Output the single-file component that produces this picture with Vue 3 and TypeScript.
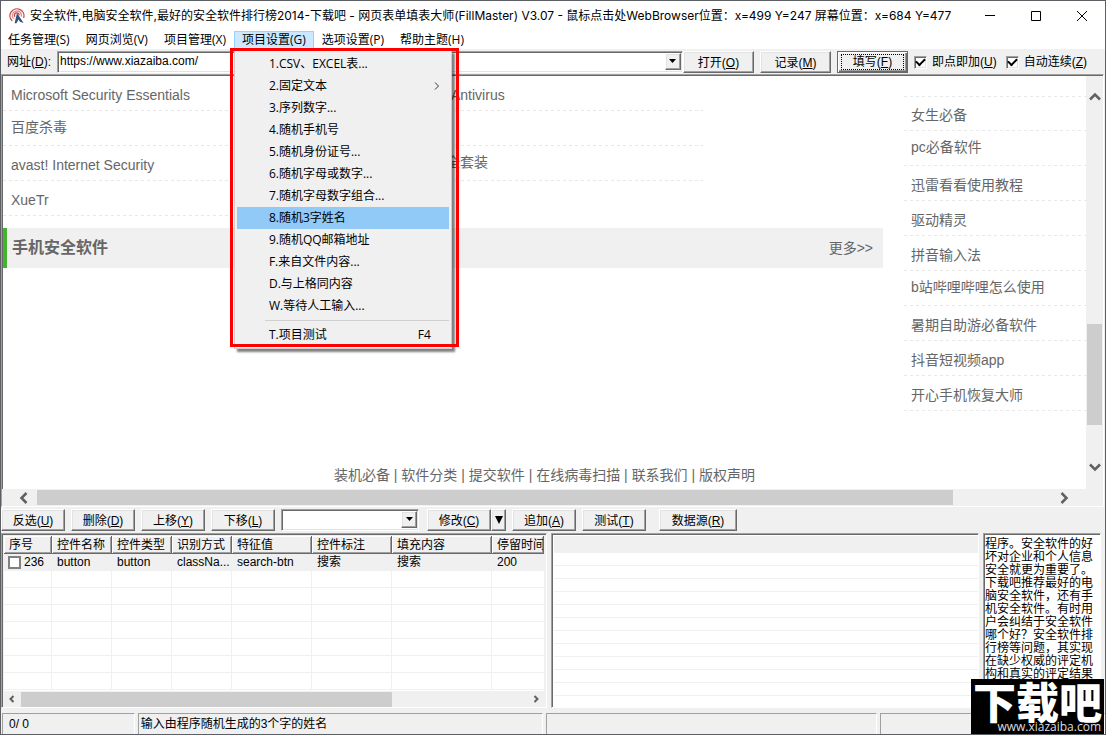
<script setup lang="ts">
import { ref } from 'vue'

interface MenuEntry { label: string; sub?: boolean; key?: string; divided?: boolean }
interface PageLink { text: string; raised?: boolean }

const menus = ['任务管理(S)', '网页浏览(V)', '项目管理(X)', '项目设置(G)', '选项设置(P)', '帮助主题(H)']
const openMenu = ref(3)
const active = ref(7)
const entries: MenuEntry[] = [
  { label: '1.CSV、EXCEL表...' },
  { label: '2.固定文本', sub: true },
  { label: '3.序列数字...' },
  { label: '4.随机手机号' },
  { label: '5.随机身份证号...' },
  { label: '6.随机字母或数字...' },
  { label: '7.随机字母数字组合...' },
  { label: '8.随机3字姓名' },
  { label: '9.随机QQ邮箱地址' },
  { label: 'F.来自文件内容...' },
  { label: 'D.与上格同内容' },
  { label: 'W.等待人工输入...' },
  { label: 'T.项目测试', key: 'F4', divided: true },
]

const url = ref('https://www.xiazaiba.com/')
const addOnClick = ref(true)
const autoContinue = ref(true)

const leftLinks: PageLink[] = [
  { text: 'Microsoft Security Essentials' },
  { text: '百度杀毒', raised: true },
  { text: 'avast! Internet Security' },
  { text: 'XueTr' },
]
const middleLinks: PageLink[] = [{ text: 'Antivirus' }, { text: '' }, { text: '全套装', raised: true }]
const sideLinks: PageLink[] = [
  { text: '女生必备' },
  { text: 'pc必备软件', raised: true },
  { text: '迅雷看看使用教程' },
  { text: '驱动精灵' },
  { text: '拼音输入法' },
  { text: 'b站哔哩哔哩怎么使用', raised: true },
  { text: '暑期自助游必备软件' },
  { text: '抖音短视频app' },
  { text: '开心手机恢复大师' },
]
const footLinks = ['装机必备', '软件分类', '提交软件', '在线病毒扫描', '联系我们', '版权声明']

const columns = ['序号', '控件名称', '控件类型', '识别方式', '特征值', '控件标注', '填充内容', '停留时间']
const cells = ['button', 'button', 'classNa...', 'search-btn', '搜索', '搜索', '200']
const rowPicked = ref(false)
const choice = ref('')
const note = ref('程序。安全软件的好坏对企业和个人信息安全就更为重要了。下载吧推荐最好的电脑安全软件，还有手机安全软件。有时用户会纠结于安全软件哪个好？安全软件排行榜等问题，其实现在缺少权威的评定机构和真实的评定结果')
</script>

<template>
  <main class="window">
    <header class="titlebar">
      <svg class="logo" viewBox="0 0 16 16" aria-hidden="true">
        <g fill="none" stroke-width="1.3">
          <path d="M3.2 13A7 7 0 1 1 14.6 10" stroke="#c4474d" />
          <path d="M4.6 10.8A4.6 4.6 0 1 1 12.4 8.6" stroke="#dc8f84" />
          <path d="M6 8.8A2.4 2.4 0 1 1 10.2 7.4" stroke="#c4474d" />
        </g>
        <path d="M8 5l6.6 10-3.6-1.2-1.4-2.4-2.2 3.8H5.6z" fill="#2d5580" />
      </svg>
      <h1>安全软件,电脑安全软件,最好的安全软件排行榜2014-下载吧 - 网页表单填表大师(FillMaster) V3.07 - 鼠标点击处WebBrowser位置：x=499 Y=247 屏幕位置：x=684 Y=477</h1>
      <div class="controls">
        <button type="button" aria-label="最小化"><svg viewBox="0 0 12 12"><path d="M1 5.5h10" /></svg></button>
        <button type="button" aria-label="最大化"><svg viewBox="0 0 12 12"><path d="M1.5 1.5h9v9h-9z" /></svg></button>
        <button type="button" aria-label="关闭"><svg viewBox="0 0 12 12"><path d="M1 1l10 10M11 1L1 11" /></svg></button>
      </div>
    </header>

    <nav class="menubar">
      <div v-for="(m, i) in menus" :key="m" class="menu-slot">
        <button type="button" class="menu-top" :class="{ open: i === openMenu }" @click="openMenu = i">{{ m }}</button>
        <div v-if="i === 3 && openMenu === 3" class="frame-mark">
          <div class="dropdown">
            <template v-for="(e, n) in entries" :key="e.label">
              <hr v-if="e.divided">
              <button type="button" class="entry" :class="{ hot: n === active }" @mouseenter="active = n">
                <span>{{ e.label }}</span>
                <svg v-if="e.sub" viewBox="0 0 6 8" aria-hidden="true"><path d="M1 .5L4.5 4 1 7.5" /></svg>
                <span v-if="e.key" class="key">{{ e.key }}</span>
              </button>
            </template>
          </div>
        </div>
      </div>
    </nav>

    <form class="toolbar" @submit.prevent>
      <label for="address">网址(<u>D</u>):</label>
      <div class="combo">
        <input id="address" v-model="url" type="text">
        <button type="button" aria-label="地址列表"><svg viewBox="0 0 7 4"><path d="M0 0h7L3.5 4z" /></svg></button>
      </div>
      <div class="tool-buttons">
        <button type="button" class="btn">打开(<u>O</u>)</button>
        <button type="button" class="btn">记录(<u>M</u>)</button>
        <button type="button" class="btn default"><span>填写(<u>F</u>)</span></button>
      </div>
      <label class="tick"><input v-model="addOnClick" type="checkbox"><span>即点即加(<u>U</u>)</span></label>
      <label class="tick"><input v-model="autoContinue" type="checkbox"><span>自动连续(<u>Z</u>)</span></label>
    </form>

    <section class="browser">
      <div class="page">
        <div class="page-body">
          <div class="main-column">
            <div class="lists">
              <ul>
                <li v-for="l in leftLinks" :key="l.text" :class="{ raised: l.raised }"><a href="#">{{ l.text }}</a></li>
              </ul>
              <ul class="second">
                <li v-for="(l, i) in middleLinks" :key="i" :class="{ raised: l.raised }"><a v-if="l.text" href="#">{{ l.text }}</a></li>
              </ul>
            </div>
            <div class="section-head">
              <h2>手机安全软件</h2>
              <a href="#">更多&gt;&gt;</a>
            </div>
          </div>
          <ul class="side">
            <li v-for="l in sideLinks" :key="l.text" :class="{ raised: l.raised }"><a href="#">{{ l.text }}</a></li>
          </ul>
        </div>
        <footer>
          <template v-for="(f, i) in footLinks" :key="f"><span v-if="i"> | </span><a href="#">{{ f }}</a></template>
        </footer>
      </div>
      <div class="vbar">
        <svg viewBox="0 0 12 12"><path d="M1 8.5L6 3.5l5 5" /></svg>
        <div class="vtrack"><i /></div>
        <svg viewBox="0 0 12 12"><path d="M1 3.5l5 5 5-5" /></svg>
      </div>
      <div class="hbar">
        <svg viewBox="0 0 12 12"><path d="M8.5 1L3.5 6l5 5" /></svg>
        <div class="htrack"><i /></div>
        <svg viewBox="0 0 12 12"><path d="M3.5 1l5 5-5 5" /></svg>
      </div>
    </section>

    <div class="actions">
      <button type="button" class="btn">反选(<u>U</u>)</button>
      <button type="button" class="btn">删除(<u>D</u>)</button>
      <button type="button" class="btn">上移(<u>Y</u>)</button>
      <button type="button" class="btn">下移(<u>L</u>)</button>
      <div class="combo small">
        <input v-model="choice" type="text" aria-label="内容">
        <button type="button" aria-label="内容列表"><svg viewBox="0 0 7 4"><path d="M0 0h7L3.5 4z" /></svg></button>
      </div>
      <div class="split">
        <button type="button" class="btn">修改(<u>C</u>)</button>
        <button type="button" class="btn arrow" aria-label="修改选项"><svg viewBox="0 0 8 8"><path d="M0 0h8L4 8z" /></svg></button>
      </div>
      <button type="button" class="btn">追加(<u>A</u>)</button>
      <button type="button" class="btn">测试(<u>T</u>)</button>
      <button type="button" class="btn wide">数据源(<u>R</u>)</button>
    </div>

    <div class="panes">
      <div class="pane list">
        <div class="table-wrap">
          <table>
            <colgroup><col class="c48"><col class="c60"><col class="c60"><col class="c60"><col class="c80"><col class="c80"><col class="c100"><col></colgroup>
            <thead><tr><th v-for="c in columns" :key="c" scope="col">{{ c }}</th></tr></thead>
            <tbody>
              <tr class="picked">
                <td class="first"><label><input v-model="rowPicked" type="checkbox">236</label></td>
                <td v-for="(c, i) in cells" :key="i">{{ c }}</td>
              </tr>
              <tr v-for="r in 7" :key="r"><td v-for="c in columns" :key="c" /></tr>
            </tbody>
          </table>
        </div>
        <div class="hbar narrow">
          <svg viewBox="0 0 12 12"><path d="M7.5 3l-3 3 3 3" /></svg>
          <div class="htrack"><i /></div>
          <svg viewBox="0 0 12 12"><path d="M4.5 3l3 3-3 3" /></svg>
        </div>
      </div>
      <div class="pane grid"><div class="grid-head" /><div class="grid-lines" /></div>
      <textarea v-model="note" class="pane" aria-label="网页说明" />
    </div>

    <footer class="status">
      <span>0/ 0</span><span>输入由程序随机生成的3个字的姓名</span><span /><span />
    </footer>

    <aside class="stamp">
      <strong>下载吧</strong>
      <span>www.xiazaiba.com</span>
    </aside>
  </main>
</template>

<style>
html, body { margin: 0; }
</style>

<style scoped>
* { box-sizing: border-box; }
.window {
  position: relative; display: flex; flex-direction: column; height: 100vh; overflow: hidden;
  background: #f0f0f0; color: #000; border: 1px solid #5c5f63;
  font: 12px/16px "Liberation Sans", "Noto Sans CJK SC", sans-serif;
}
button, input, textarea { font: inherit; color: inherit; margin: 0; }
button { padding: 0; border: 0; background: none; white-space: nowrap; }
svg { display: block; flex: none; }
ul { list-style: none; margin: 0; padding: 0; }
u { text-underline-offset: 1px; }

.titlebar { display: flex; align-items: center; height: 30px; padding-left: 8px; background: #fff; }
.logo { width: 16px; height: 16px; margin-right: 5px; }
h1 { flex: 1; margin: 0; font: 12px/16px Inter, "Noto Sans CJK SC", sans-serif; white-space: nowrap; }
.controls { display: flex; }
.controls button { width: 46px; height: 28px; display: grid; place-items: center; }
.controls svg { width: 12px; height: 12px; fill: none; stroke: #000; }

.menubar { display: flex; height: 18px; background: #fff; font-family: "Open Sans", "Noto Sans CJK SC", sans-serif; }
.menu-slot { position: relative; display: flex; }
.menu-top { padding: 0 7px; border: 1px solid transparent; line-height: 16px; }
.menu-slot:first-child .menu-top { padding-left: 6px; }
.menu-top.open { background: #cce8ff; border-color: #99d1ff; }
.frame-mark { position: absolute; z-index: 5; top: 17px; left: -4px; width: 229px; height: 299px; padding: 2px 0 0 4px; }
.frame-mark::after { content: ""; position: absolute; inset: 0; border: 3px solid #f00; pointer-events: none; }
.dropdown { width: 218px; padding: 2px; background: #f0f0f0; border: 1px solid #ccc; box-shadow: 3px 3px 2px rgba(0, 0, 0, .5); }
.entry { display: flex; align-items: center; width: 100%; height: 22px; padding: 0 18px 0 32px; text-align: left; }
.entry span:first-child { flex: 1; }
.entry svg { width: 6px; height: 8px; margin-right: -9px; fill: none; stroke: #333; }
.entry.hot { background: #91c9f7; }
hr { margin: 3px 0 3px 28px; border: 0; border-top: 1px solid #d0d0d0; }

.toolbar { display: flex; align-items: center; height: 25px; padding: 0 18px 0 6px; white-space: nowrap; }
.toolbar > label { padding-top: 1px; }
.toolbar > label:first-child { width: 50px; }
.combo { flex: 1; display: flex; height: 22px; padding: 1px; background: #fff; border: 1px solid #a0a0a0; border-right-color: #fff; border-bottom-color: #fff; box-shadow: inset 1px 1px #696969, inset -1px -1px #e3e3e3; }
.combo input { flex: 1; min-width: 0; padding: 0 1px 2px; border: 0; outline: 0; background: none; }
.combo button { width: 16px; height: 17px; display: grid; place-items: center; }
.combo svg { width: 7px; height: 4px; }
.btn, .combo button { background: #f0f0f0; border: 1px solid; border-color: #fff #696969 #696969 #fff; box-shadow: inset -1px -1px #a0a0a0, inset 1px 1px #e3e3e3; }
.btn { height: 22px; width: 64px; line-height: 17px; padding-top: 3px; }
.tool-buttons { display: flex; gap: 6px; margin-right: 6px; }
.tool-buttons .btn { width: 71px; }
.btn.default { border-color: #696969; box-shadow: inset 1px 1px #fff, inset -1px -1px #696969, inset -2px -2px #a0a0a0; padding: 2px 3px; }
.default span { display: block; line-height: 14px; border: 1px dotted #000; }
.tick { display: flex; align-items: center; gap: 5px; }
.tick + .tick { margin-left: 9px; }
input[type="checkbox"] { appearance: none; flex: none; width: 13px; height: 13px; background: #fff; border: 1px solid #a0a0a0; border-right-color: #fff; border-bottom-color: #fff; box-shadow: inset 1px 1px #696969, inset -1px -1px #e3e3e3; display: grid; place-items: center; }
.tick input:checked::after { content: ""; width: 7px; height: 4px; border: solid #000; border-width: 0 0 2px 2px; transform: translateY(-1px) rotate(-45deg); }

.browser { flex: 1; min-height: 0; display: grid; grid-template: minmax(0, 1fr) 17px / minmax(0, 1fr) 17px; margin-right: 1px; border: 1px solid #a0a0a0; border-right-color: #fff; border-bottom-color: #fff; box-shadow: inset 0 1px #696969; padding-top: 1px; }
.page { position: relative; display: flex; flex-direction: column; justify-content: space-between; background: #fff; border-left: 1px solid #696969; color: #666; font: 14px/20px "Liberation Sans", "Noto Sans CJK SC", sans-serif; overflow: hidden; }
.page a { color: inherit; text-decoration: none; }
.page-body { display: flex; justify-content: space-between; }
.main-column { flex: 1; max-width: 880px; }
.lists { display: flex; }
li { height: 35px; padding: 5px 8px 0; background: repeating-linear-gradient(90deg, #e8e8e8 0 3px, transparent 3px 6px) bottom / 100% 1px no-repeat; line-height: 28px; white-space: nowrap; }
li.raised { line-height: 22px; }
.lists ul { width: 225px; }
.lists .second { width: 475px; padding-left: 215px; }
.second li { padding-left: 3px; }
.second li:first-child { padding-left: 8px; }
.section-head { display: flex; align-items: center; justify-content: space-between; height: 40px; margin-top: 12px; padding: 0 10px 0 5px; background: #f0f0f0; border-left: 4px solid #43b52b; }
h2 { margin: 0; font-size: 16px; line-height: 20px; }
.side { width: 182px; padding-top: 20px; }
.side li { padding-left: 7px; }
.side li:first-child { background-image: repeating-linear-gradient(90deg, #e8e8e8 0 3px, transparent 3px 6px), repeating-linear-gradient(90deg, #e8e8e8 0 3px, transparent 3px 6px); background-position: top, bottom; }
.page footer { padding-bottom: 4px; text-align: center; white-space: pre; }

.vbar { display: flex; flex-direction: column; align-items: center; padding: 15px 0 16px; }
.vbar svg, .hbar svg { width: 12px; height: 12px; fill: none; stroke: #606060; stroke-width: 2.5; }
.vtrack { flex: 1; width: 15px; margin: 10px 0; display: flex; flex-direction: column; justify-content: flex-end; }
.vtrack i { height: 30%; margin-bottom: 26px; background: #cdcdcd; }
.hbar { grid-column: 1; display: flex; align-items: center; height: 17px; padding: 0 16px; }
.htrack { flex: 1; height: 15px; margin: 0 7px; display: flex; }
.htrack i { flex: 916; background: #cdcdcd; }
.htrack::after { content: ""; flex: 98; }
.narrow { height: 16px; padding: 0 2px; }
.narrow .htrack { margin: 0 3px; }
.narrow .htrack i { flex: 372; }
.narrow .htrack::after { flex: 136; }
.narrow svg { stroke-width: 2; }

.actions { display: flex; align-items: center; gap: 6px; height: 26px; padding-bottom: 1px; }
.actions .combo { flex: none; width: 138px; }
.actions .wide { width: 78px; margin-left: 7px; }
.split { display: flex; margin-left: 2px; }
.btn.arrow { width: 15px; padding: 0; display: grid; place-items: center; }
.arrow svg { width: 8px; height: 8px; }

.panes { display: grid; grid-template-columns: 547fr 428fr 118fr; gap: 4px; height: 175px; padding-right: 4px; }
.pane { min-width: 0; min-height: 0; background: #fff; border: 1px solid #a0a0a0; border-right-color: #fff; border-bottom-color: #fff; box-shadow: inset 1px 1px #696969; padding: 2px 0 0 2px; overflow: hidden; }
.list { display: flex; flex-direction: column; background: #f0f0f0; padding-right: 2px; }
.table-wrap { flex: 1; overflow: hidden; background: #fff; }
table { width: 100%; table-layout: fixed; border-collapse: separate; border-spacing: 0; }
.c48 { width: 48px; } .c60 { width: 60px; } .c80 { width: 80px; } .c100 { width: 100px; }
th, td { height: 17px; padding: 0 0 0 5px; line-height: 16px; font-weight: 400; text-align: left; overflow: hidden; white-space: nowrap; border: solid #f0f0f0; border-width: 0 1px 1px 0; }
th { height: 18px; padding-top: 1px; background: #f0f0f0; border-color: #696969; box-shadow: inset 1px 1px #fff, inset -1px -1px #a0a0a0; }
td:last-child { border-right: 0; }
.picked td { background: #f0f0f0; }
td.first { padding-left: 4px; }
.first label { display: flex; align-items: center; gap: 3px; }
.first input { border: 2px solid #808080; box-shadow: none; }
.first input:checked { background: #808080; }
.grid { display: flex; flex-direction: column; }
.grid-head { height: 17px; background: #f0f0f0; }
.grid-lines { flex: 1; background: repeating-linear-gradient(#fff 0 12px, #f0f0f0 12px 13px); }
textarea { display: block; width: 100%; resize: none; outline: 0; border-radius: 0; line-height: 13px; }
textarea.pane { padding: 4px 0 0 1px; }

.status { display: grid; grid-template-columns: 133fr 406fr 332fr 226fr; gap: 3px; height: 26px; padding: 5px 0 1px 1px; }
.status span { padding: 2px 2px; line-height: 16px; border: 1px solid #a0a0a0; border-right-color: #fff; border-bottom-color: #fff; }
.status span:first-child { padding-left: 6px; }

.stamp { position: absolute; right: 1px; bottom: -1px; width: 133px; height: 56px; background: #000; color: #fff; white-space: nowrap; }
.stamp strong { display: block; font: 900 43px/42px "Noto Sans CJK SC", sans-serif; text-align: center; }
.stamp span { display: block; padding-right: 3px; text-align: right; font: 12px/12px "Open Sans", sans-serif; color: #ddd; }
</style>
